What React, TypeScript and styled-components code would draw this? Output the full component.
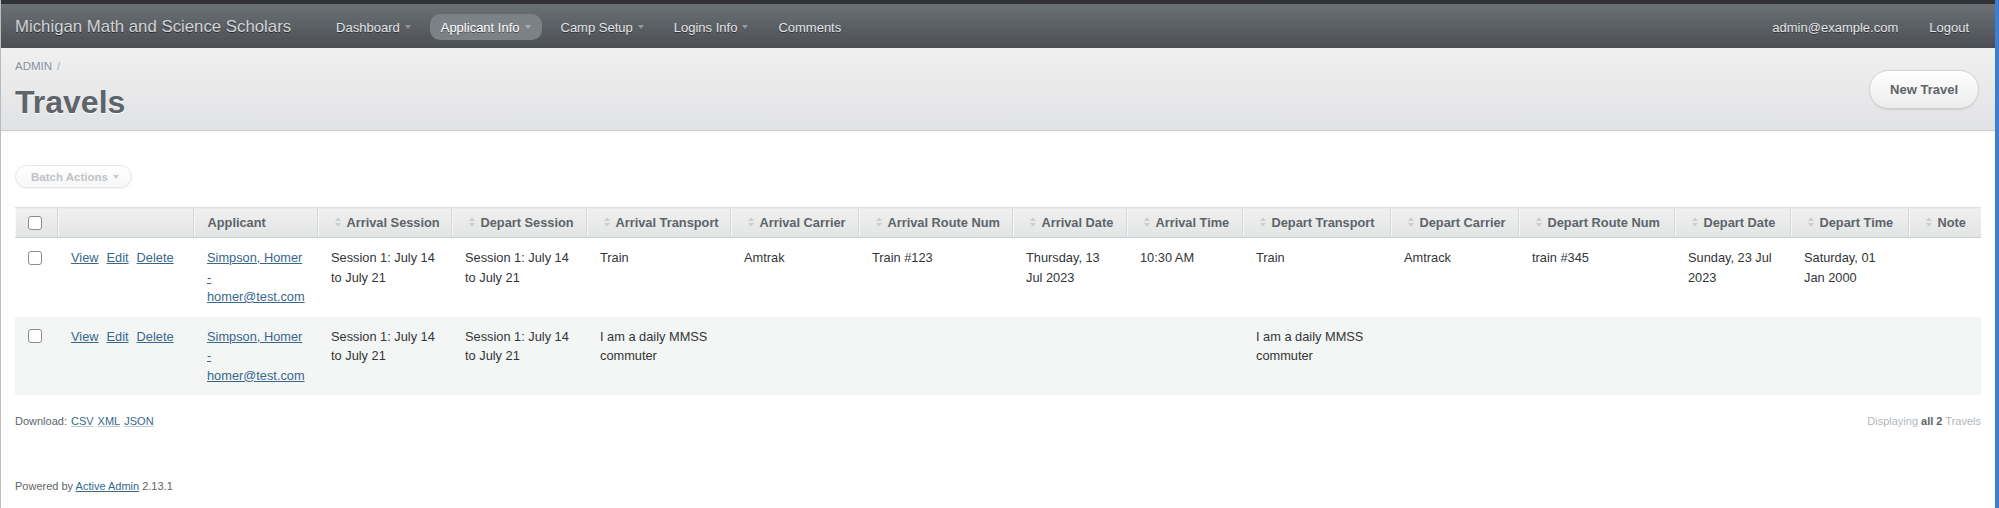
import React from "react";
import styled, { createGlobalStyle } from "styled-components";

const GlobalStyle = createGlobalStyle`
  html, body { margin: 0; padding: 0; background: #fff; }
  body { font-family: "Liberation Sans", Arial, Helvetica, sans-serif; color: #323537; }
  * { box-sizing: border-box; }
`;

const Frame = styled.div`
  min-height: 508px;
  border-left: 1px solid #bdbdbd;
  border-right: 4px solid #3d7dd4;
  display: flex;
  flex-direction: column;
`;

const Header = styled.header`
  height: 48px;
  border-top: 4px solid #323337;
  background: linear-gradient(#6c7176, #4b4f54);
  display: flex;
  align-items: center;
  padding: 2px 26px 0 14px;
`;

const SiteTitle = styled.h1`
  margin: 0 34px 0 0;
  font-size: 16.8px;
  font-weight: normal;
  color: #d2d4d6;
  text-shadow: 0 1px 0 rgba(0, 0, 0, 0.5);
  white-space: nowrap;
`;

const Tabs = styled.nav`
  display: flex;
  align-items: center;
  gap: 8px;
  flex: 1;
`;

const Tab = styled.a<{ $active?: boolean }>`
  display: flex;
  align-items: center;
  height: 26px;
  padding: 0 11px;
  border-radius: 10px;
  font-size: 13px;
  white-space: nowrap;
  color: ${(p) => (p.$active ? "#ffffff" : "#e2e4e6")};
  background: ${(p) => (p.$active ? "#7c8186" : "transparent")};
  text-shadow: 0 1px 0 rgba(0, 0, 0, 0.45);
  text-decoration: none;
`;

const Caret = styled.span<{ $color?: string }>`
  display: inline-block;
  width: 0;
  height: 0;
  margin-left: 5px;
  border-left: 3.5px solid transparent;
  border-right: 3.5px solid transparent;
  border-top: 4px solid ${(p) => p.$color || "rgba(255,255,255,0.35)"};
`;

const UtilityNav = styled.div`
  display: flex;
  align-items: center;
  gap: 31px;
`;

const UtilityLink = styled.a`
  font-size: 13px;
  color: #e2e4e6;
  text-shadow: 0 1px 0 rgba(0, 0, 0, 0.45);
  text-decoration: none;
  white-space: nowrap;
`;

const TitleBar = styled.div`
  height: 83px;
  background: linear-gradient(#f0f0f0, #e1e2e4);
  border-bottom: 1px solid #cdcdcd;
  box-shadow: 0 1px 2px rgba(0, 0, 0, 0.05);
  display: flex;
  align-items: center;
  justify-content: space-between;
  padding: 0 16px 0 14px;
`;

const TitleLeft = styled.div`
  align-self: flex-start;
  padding-top: 10px;
  display: flex;
  flex-direction: column;
`;

const Breadcrumb = styled.div`
  font-size: 11.5px;
  line-height: 16px;
  color: #8a949e;
  text-transform: uppercase;
  span {
    margin-left: 5px;
    color: #a7adb3;
  }
`;

const PageTitle = styled.h2`
  margin: 10px 0 0 0;
  font-size: 32px;
  line-height: 36px;
  font-weight: bold;
  color: #5e6469;
  text-shadow: 0 1px 0 #fff;
`;

const PillButton = styled.a`
  display: inline-flex;
  align-items: center;
  height: 39px;
  padding: 0 20px;
  border-radius: 200px;
  border: 1px solid #cfd1d3;
  background: linear-gradient(#ffffff, #ececec);
  box-shadow: 0 1px 1px rgba(0, 0, 0, 0.1), inset 0 1px 0 #fff;
  font-size: 13px;
  font-weight: bold;
  color: #5e6469;
  text-decoration: none;
  white-space: nowrap;
`;

const Main = styled.main`
  padding: 34px 14px 0 14px;
`;

const BatchButton = styled.div`
  display: inline-flex;
  align-items: center;
  height: 23px;
  width: 117px;
  padding: 0 0 0 15px;
  border-radius: 200px;
  border: 1px solid #e6e7e8;
  background: linear-gradient(#ffffff, #f6f6f6);
  box-shadow: 0 1px 1px rgba(0, 0, 0, 0.05);
  font-size: 11.5px;
  font-weight: bold;
  color: #bfc3c7;
  white-space: nowrap;
`;

const Table = styled.table`
  margin-top: 19px;
  width: 100%;
  table-layout: fixed;
  border-collapse: collapse;
  font-size: 12.8px;
`;

const Th = styled.th`
  height: 30px;
  padding: 0 10px 0 14px;
  text-align: left;
  vertical-align: middle;
  font-weight: bold;
  color: #5e6469;
  white-space: nowrap;
  overflow: hidden;
  background: linear-gradient(#f1f1f1, #e2e3e4);
  border-top: 1px solid #dcdedf;
  border-bottom: 1px solid #cfd2d4;
  border-right: 1px solid #d4d7d9;
  box-shadow: inset 1px 0 0 #f7f7f7, 0 1px 2px rgba(0, 0, 0, 0.08);
  &:last-child {
    border-right: none;
  }
`;

const SortLabel = styled.span`
  display: inline-flex;
  align-items: center;
  gap: 6px;
  margin-left: 3px;
`;

const Row = styled.tr<{ $even?: boolean }>`
  background: ${(p) => (p.$even ? "#f4f5f5" : "#ffffff")};
`;

const Td = styled.td`
  padding: 10px 10px 10px 14px;
  line-height: 19.5px;
  vertical-align: top;
  color: #323537;
`;

const Check = styled.span`
  display: inline-block;
  width: 14px;
  height: 14px;
  border: 1px solid #8c8c8c;
  border-radius: 3px;
  background: #fff;
  vertical-align: middle;
`;

const CheckCell = styled(Td)`
  padding-left: 13px;
  padding-top: 12px;
  line-height: 14px;
`;

const HeadCheck = styled(Th)`
  padding-left: 13px;
`;

const Actions = styled.div`
  display: flex;
  gap: 8px;
`;

const Link = styled.a`
  color: #38678b;
  text-decoration: underline;
`;

const Bottom = styled.div`
  margin-top: 18px;
  display: flex;
  justify-content: space-between;
  font-size: 11px;
  line-height: 16px;
  color: #5e6469;
`;

const DownloadLink = styled.a`
  color: #38678b;
  text-decoration: underline;
  text-decoration-color: #b9cad8;
  margin-left: 4px;
`;

const Displaying = styled.div`
  color: #b0b7bc;
  b {
    color: #5e6469;
  }
`;

const Footer = styled.footer`
  padding: 49px 14px 20px 14px;
  font-size: 11px;
  line-height: 16px;
  color: #5e6469;
`;

const SortIcon = () => (
  <svg width="6" height="10" viewBox="0 0 6 10">
    <polygon points="0,4 3,0.5 6,4" fill="#c9ccd0" />
    <polygon points="0,6 3,9.5 6,6" fill="#c9ccd0" />
  </svg>
);

const columns: { label: string; width: number; sortable: boolean }[] = [
  { label: "", width: 42, sortable: false },
  { label: "", width: 136, sortable: false },
  { label: "Applicant", width: 124, sortable: false },
  { label: "Arrival Session", width: 134, sortable: true },
  { label: "Depart Session", width: 135, sortable: true },
  { label: "Arrival Transport", width: 144, sortable: true },
  { label: "Arrival Carrier", width: 128, sortable: true },
  { label: "Arrival Route Num", width: 154, sortable: true },
  { label: "Arrival Date", width: 114, sortable: true },
  { label: "Arrival Time", width: 116, sortable: true },
  { label: "Depart Transport", width: 148, sortable: true },
  { label: "Depart Carrier", width: 128, sortable: true },
  { label: "Depart Route Num", width: 156, sortable: true },
  { label: "Depart Date", width: 116, sortable: true },
  { label: "Depart Time", width: 118, sortable: true },
  { label: "Note", width: 73, sortable: true },
];

type Travel = {
  arrivalSession: string;
  departSession: string;
  arrivalTransport: string;
  arrivalCarrier: string;
  arrivalRoute: string;
  arrivalDate: string;
  arrivalTime: string;
  departTransport: string;
  departCarrier: string;
  departRoute: string;
  departDate: string;
  departTime: string;
  note: string;
};

const rows: Travel[] = [
  {
    arrivalSession: "Session 1: July 14 to July 21",
    departSession: "Session 1: July 14 to July 21",
    arrivalTransport: "Train",
    arrivalCarrier: "Amtrak",
    arrivalRoute: "Train #123",
    arrivalDate: "Thursday, 13 Jul 2023",
    arrivalTime: "10:30 AM",
    departTransport: "Train",
    departCarrier: "Amtrack",
    departRoute: "train #345",
    departDate: "Sunday, 23 Jul 2023",
    departTime: "Saturday, 01 Jan 2000",
    note: "",
  },
  {
    arrivalSession: "Session 1: July 14 to July 21",
    departSession: "Session 1: July 14 to July 21",
    arrivalTransport: "I am a daily MMSS commuter",
    arrivalCarrier: "",
    arrivalRoute: "",
    arrivalDate: "",
    arrivalTime: "",
    departTransport: "I am a daily MMSS commuter",
    departCarrier: "",
    departRoute: "",
    departDate: "",
    departTime: "",
    note: "",
  },
];

export default function App() {
  return (
    <>
      <GlobalStyle />
      <Frame>
        <Header>
          <SiteTitle>Michigan Math and Science Scholars</SiteTitle>
          <Tabs>
            <Tab>
              Dashboard
              <Caret />
            </Tab>
            <Tab $active>
              Applicant Info
              <Caret />
            </Tab>
            <Tab>
              Camp Setup
              <Caret />
            </Tab>
            <Tab>
              Logins Info
              <Caret />
            </Tab>
            <Tab>Comments</Tab>
          </Tabs>
          <UtilityNav>
            <UtilityLink>admin@example.com</UtilityLink>
            <UtilityLink>Logout</UtilityLink>
          </UtilityNav>
        </Header>
        <TitleBar>
          <TitleLeft>
            <Breadcrumb>
              Admin<span>/</span>
            </Breadcrumb>
            <PageTitle>Travels</PageTitle>
          </TitleLeft>
          <PillButton>New Travel</PillButton>
        </TitleBar>
        <Main>
          <BatchButton>
            Batch Actions
            <Caret $color="#c8cbce" />
          </BatchButton>
          <Table>
            <colgroup>
              {columns.map((c, i) => (
                <col key={i} style={{ width: c.width }} />
              ))}
            </colgroup>
            <thead>
              <tr>
                {columns.map((c, i) =>
                  i === 0 ? (
                    <HeadCheck key={i}>
                      <Check />
                    </HeadCheck>
                  ) : (
                    <Th key={i}>
                      {c.sortable ? (
                        <SortLabel>
                          <SortIcon />
                          {c.label}
                        </SortLabel>
                      ) : (
                        c.label
                      )}
                    </Th>
                  )
                )}
              </tr>
            </thead>
            <tbody>
              {rows.map((r, i) => (
                <Row key={i} $even={i % 2 === 1}>
                  <CheckCell>
                    <Check />
                  </CheckCell>
                  <Td>
                    <Actions>
                      <Link>View</Link>
                      <Link>Edit</Link>
                      <Link>Delete</Link>
                    </Actions>
                  </Td>
                  <Td>
                    <Link>Simpson, Homer - homer@test.com</Link>
                  </Td>
                  <Td>{r.arrivalSession}</Td>
                  <Td>{r.departSession}</Td>
                  <Td>{r.arrivalTransport}</Td>
                  <Td>{r.arrivalCarrier}</Td>
                  <Td>{r.arrivalRoute}</Td>
                  <Td>{r.arrivalDate}</Td>
                  <Td>{r.arrivalTime}</Td>
                  <Td>{r.departTransport}</Td>
                  <Td>{r.departCarrier}</Td>
                  <Td>{r.departRoute}</Td>
                  <Td>{r.departDate}</Td>
                  <Td>{r.departTime}</Td>
                  <Td>{r.note}</Td>
                </Row>
              ))}
            </tbody>
          </Table>
          <Bottom>
            <div>
              Download:
              <DownloadLink>CSV</DownloadLink>
              <DownloadLink>XML</DownloadLink>
              <DownloadLink>JSON</DownloadLink>
            </div>
            <Displaying>
              Displaying <b>all 2</b> Travels
            </Displaying>
          </Bottom>
        </Main>
        <Footer>
          Powered by <Link>Active Admin</Link> 2.13.1
        </Footer>
      </Frame>
    </>
  );
}
